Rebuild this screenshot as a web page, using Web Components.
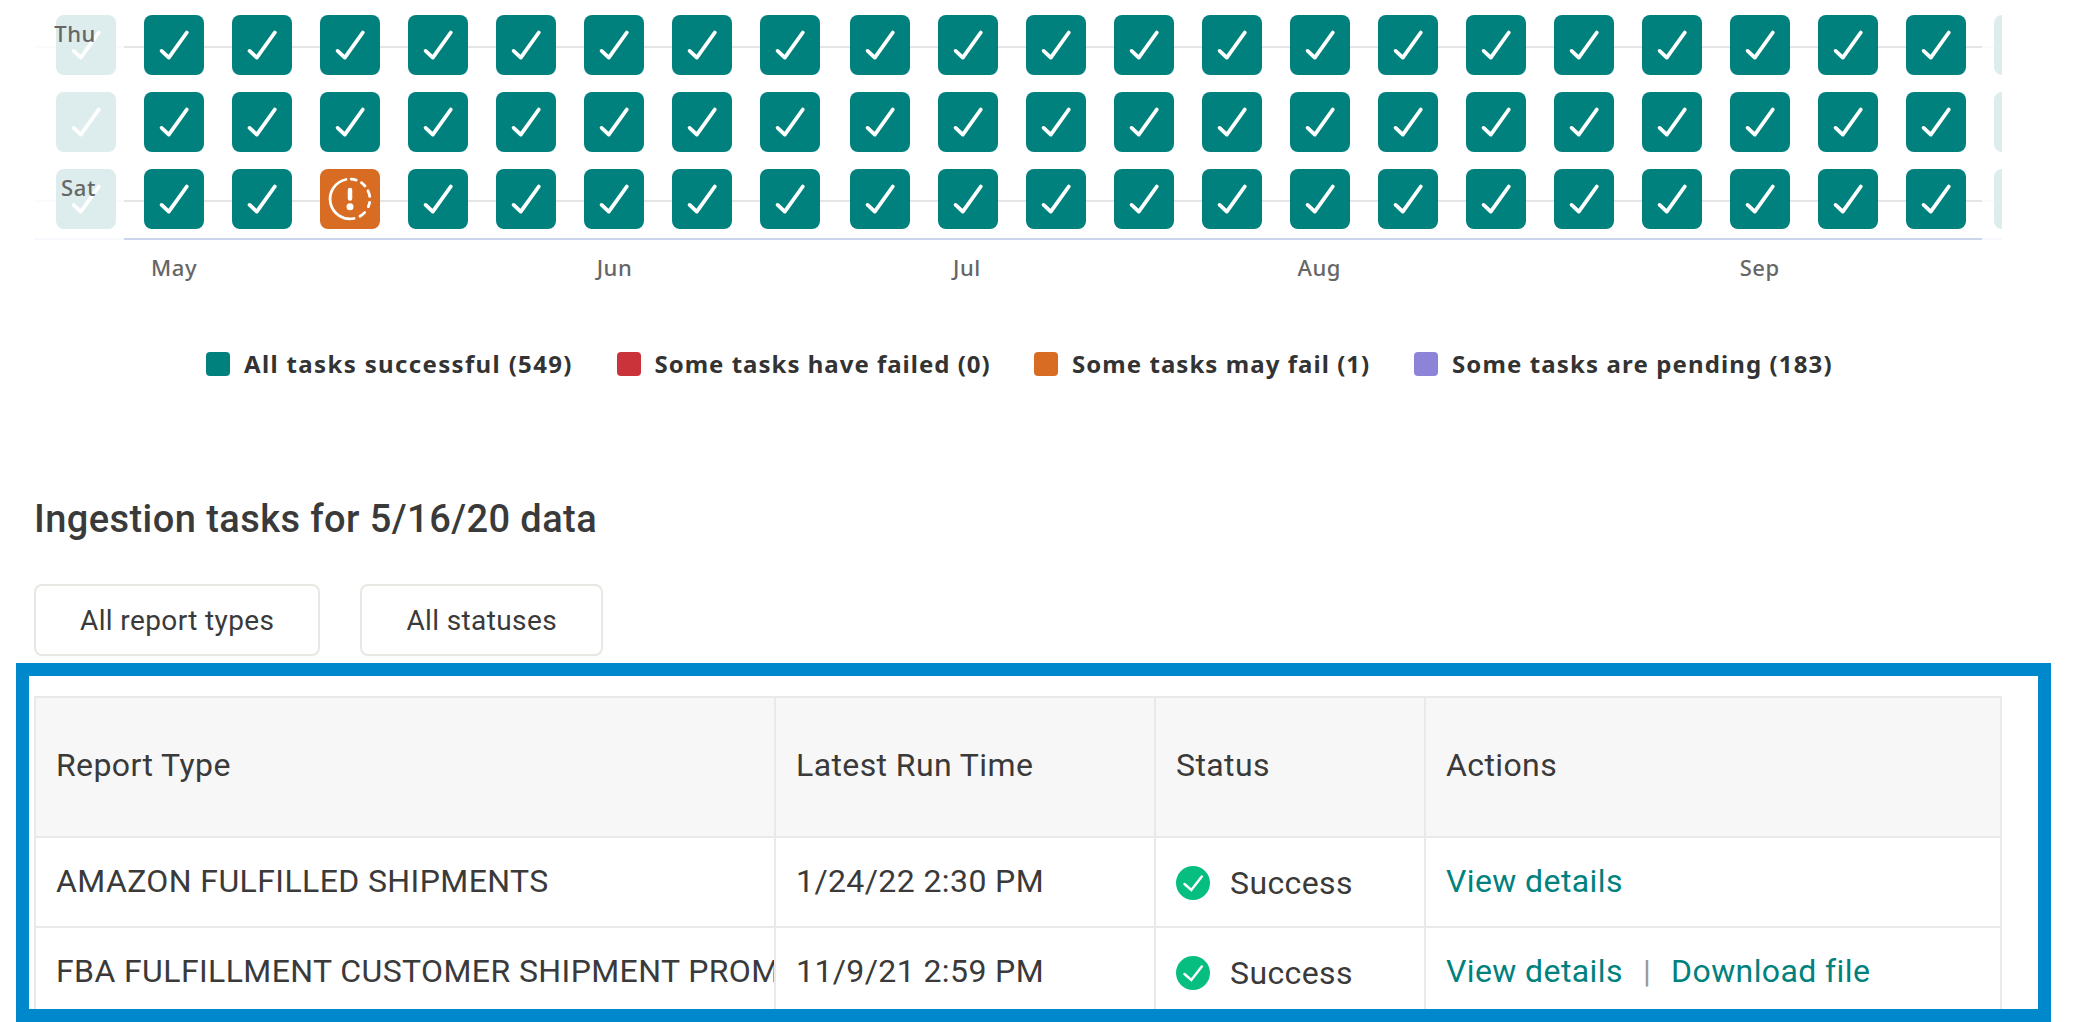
<!DOCTYPE html>
<html lang="en">
<head>
<meta charset="utf-8">
<title>Ingestion tasks</title>
<style>
    :root {
        --teal: #01817e;
        --red: #cb333b;
        --orange: #d86c22;
        --purple: #8d84d8;
        --green: #05be80;
        --blue: #0088cd;
        --text: #3a3a3a;
        --line: #e9e9e9;
        --chart-font: "Noto Sans", sans-serif;
    }

    body {
        margin: 0;
        width: 2100px;
        height: 1022px;
        overflow: hidden;
        background: #fff;
        color: var(--text);
        font-family: Roboto, sans-serif;
    }
</style>
</head>
<body>
<ingestion-page></ingestion-page>

<script>
/** Small helper: build a template from a string */
const template = (html) => {
    const t = document.createElement("template");
    t.innerHTML = html;
    return t;
};

/** Base class that clones a template into an open shadow root */
class BaseElement extends HTMLElement {
    constructor() {
        super();
        const shadow = this.attachShadow({ mode: "open" });
        shadow.append(this.constructor.template.content.cloneNode(true));
    }
}

/**
 * One day of the calendar
 */
class DayCell extends BaseElement {
    static template = template(`
        <style>
            :host {
                display: block;
                flex: none;
                width: 60px;
                height: 60px;
                border-radius: 8px;
                background: var(--teal);
            }
            :host([state="warn"]) { background: var(--orange); }
            :host([faded]) { background: #ddecec; }
            svg { display: block; fill: none; stroke: #fff; stroke-linecap: round; }
            .warn, :host([state="warn"]) .ok { display: none; }
            :host([state="warn"]) .warn { display: block; }
        </style>
        <svg class="ok" width="60" height="60" viewBox="0 0 60 60" stroke-width="3.8" stroke-linejoin="round">
            <path d="M17.6 35.9 L24.8 42.6 L42.8 17.5"/>
        </svg>
        <svg class="warn" width="60" height="60" viewBox="0 0 60 60" stroke-width="2.8">
            <path d="M26 10.5 A19.9 19.9 0 1 0 34 49.5"/>
            <path d="M31.2 10.1 A19.9 19.9 0 0 1 36.2 11.1 M41.4 13.7 A19.9 19.9 0 0 1 45 17 M48 21.8 A19.9 19.9 0 0 1 49.8 27.4 M49.6 33.4 A19.9 19.9 0 0 1 48.3 37.6 M44.6 43.6 A19.9 19.9 0 0 1 40 47.2"/>
            <path d="M30 21 V29.6" stroke-width="4.5"/>
            <circle cx="30" cy="37.8" r="3.5" fill="#fff" stroke="none"/>
        </svg>
    `);
}
customElements.define("day-cell", DayCell);

/**
 * A weekday row, with an optional label over the first cell
 */
class WeekdayRow extends BaseElement {
    static template = template(`
        <style>
            :host {
                display: flex;
                position: relative;
                gap: 28px;
                height: 60px;
                padding-left: 22px;
                margin-bottom: 17px;
            }
            :host([label]) {
                background:
                    linear-gradient(#e5e5e5, #e5e5e5) 90px 31px / 1858px 2px no-repeat,
                    linear-gradient(#fbfbfb, #fbfbfb) 0 31px / 100% 2px no-repeat;
            }
            span {
                position: absolute;
                right: 1906px;
                top: 3px;
                font: 500 22px/30px var(--chart-font);
                letter-spacing: 0.6px;
                color: #666;
            }
            /* half year boundary */
            day-cell:nth-of-type(10) { margin-left: 2px; }
        </style>
        <span></span>
    `);

    connectedCallback() {
        this.shadowRoot.querySelector("span").textContent = this.getAttribute("label") || "";
        const warn = this.getAttribute("warn");
        for (let i = 0; i < 23; i++) {
            const cell = document.createElement("day-cell");
            if (i === 0 || i === 22) cell.setAttribute("faded", "");
            if (warn === String(i)) cell.setAttribute("state", "warn");
            this.shadowRoot.append(cell);
        }
    }
}
customElements.define("weekday-row", WeekdayRow);

/**
 * Calendar chart, rows on top of the month axis
 */
class TaskCalendar extends BaseElement {
    static template = template(`
        <style>
            :host {
                display: block;
                width: 1968px;
                height: 290px;
                padding-top: 15px;
                box-sizing: border-box;
                overflow: hidden;
            }
            .axis {
                display: grid;
                grid-template-columns: repeat(21, 88.1px);
                margin-top: -8px;
                padding: 14px 0 0 96px;
                background:
                    linear-gradient(#cad5ec, #cad5ec) 90px 0 / 1858px 2px no-repeat,
                    linear-gradient(#f8f9fd, #f8f9fd) 0 0 / 100% 2px no-repeat;
                font: 500 22px/30px var(--chart-font);
                letter-spacing: 0.6px;
                color: #666;
                text-align: center;
            }
            .axis span { grid-row: 1; }
        </style>
        <weekday-row label="Thu"></weekday-row>
        <weekday-row></weekday-row>
        <weekday-row label="Sat" warn="3"></weekday-row>
        <div class="axis">
            <span style="grid-column: 1">May</span>
            <span style="grid-column: 6">Jun</span>
            <span style="grid-column: 10">Jul</span>
            <span style="grid-column: 14">Aug</span>
            <span style="grid-column: 19">Sep</span>
        </div>
    `);
}
customElements.define("task-calendar", TaskCalendar);

/**
 * Legend entry: colored swatch and its text
 */
class LegendItem extends BaseElement {
    static template = template(`
        <style>
            :host {
                display: flex;
                align-items: center;
                gap: 14px;
                font: bold 24px/32px var(--chart-font);
                white-space: nowrap;
                color: #333;
            }
            i {
                width: 24px;
                height: 24px;
                border-radius: 4px;
                background: var(--swatch);
            }
            span { padding-top: 1px; }
        </style>
        <i></i><span><slot></slot></span>
    `);
}
customElements.define("legend-item", LegendItem);

/**
 * Filter button
 */
class FilterButton extends BaseElement {
    static template = template(`
        <style>
            :host { display: block; }
            button {
                display: block;
                height: 72px;
                padding: 2px 44px 0;
                border: 2px solid #e9e7e2;
                border-radius: 8px;
                background: #fff;
                color: inherit;
                font: 28px/32px Roboto, sans-serif;
                letter-spacing: 0.38px;
            }
        </style>
        <button><slot></slot></button>
    `);
}
customElements.define("filter-button", FilterButton);

/**
 * Status with a round check icon
 */
class TaskStatus extends BaseElement {
    static template = template(`
        <style>
            :host { display: flex; align-items: center; gap: 20px; padding-top: 4px; }
            svg { display: block; }
        </style>
        <svg width="34" height="34" viewBox="0 0 34 34">
            <circle cx="17" cy="17" r="17" fill="var(--green)"/>
            <path d="M8.5 18 L15.3 24 L25.8 10.5" fill="none" stroke="#fff" stroke-width="2.5" stroke-linecap="round"/>
        </svg>
        <slot></slot>
    `);
}
customElements.define("task-status", TaskStatus);

/**
 * Table row with four columns
 */
class TableRow extends BaseElement {
    static template = template(`
        <style>
            :host {
                display: grid;
                grid-template-columns: 740px 380px 270px 1fr;
                height: 88px;
                border-bottom: 2px solid var(--line);
                font-size: 32px;
                line-height: 40px;
                letter-spacing: 0.4px;
            }
            :host([header]) { height: 138px; background: #f7f7f7; }
            div {
                display: flex;
                align-items: center;
                overflow: hidden;
                padding: 0 0 2px 20px;
                white-space: nowrap;
                border-right: 2px solid var(--line);
            }
            :host([header]) div { padding-bottom: 4px; }
        </style>
        <div><slot name="type"></slot></div>
        <div><slot name="time"></slot></div>
        <div><slot name="status"></slot></div>
        <div><slot name="actions"></slot></div>
    `);
}
customElements.define("table-row", TableRow);

/**
 * Links of a row, separated by a bar
 */
class RowActions extends BaseElement {
    static template = template(`
        <style>
            :host { display: flex; }
            a { color: var(--teal); }
            a + a::before { content: "|"; color: #999; margin: 0 20px; }
        </style>
    `);

    connectedCallback() {
        this.getAttribute("links").split(",").forEach((text) => {
            const a = document.createElement("a");
            a.textContent = text;
            this.shadowRoot.append(a);
        });
    }
}
customElements.define("row-actions", RowActions);

/**
 * Whole page
 */
class IngestionPage extends BaseElement {
    static template = template(`
        <style>
            :host { display: block; }
            task-calendar { margin-left: 34px; }
            .legend {
                display: grid;
                grid-template-columns: 410.5px 417.5px 380px auto;
                margin: 57px 0 0 206px;
            }
            h2 {
                margin: 115px 0 0 34px;
                font-size: 38px;
                line-height: 48px;
                font-weight: 500;
                letter-spacing: 0.43px;
            }
            .filters { display: flex; gap: 40px; margin: 41px 0 0 34px; }
            /* highlighted area round the table */
            .frame {
                width: 2035px;
                height: 359px;
                margin: 7px 0 0 16px;
                padding: 20px 36px 0 5px;
                box-sizing: border-box;
                border: 13px solid var(--blue);
                overflow: hidden;
            }
            .table { border: 2px solid var(--line); border-right: none; }
        </style>
        <task-calendar></task-calendar>
        <div class="legend">
            <legend-item style="--swatch: var(--teal); letter-spacing: 1.35px">All tasks successful (549)</legend-item>
            <legend-item style="--swatch: var(--red); letter-spacing: 1px">Some tasks have failed (0)</legend-item>
            <legend-item style="--swatch: var(--orange); letter-spacing: 1.05px">Some tasks may fail (1)</legend-item>
            <legend-item style="--swatch: var(--purple); letter-spacing: 1.12px">Some tasks are pending (183)</legend-item>
        </div>
        <h2>Ingestion tasks for 5/16/20 data</h2>
        <div class="filters">
            <filter-button>All report types</filter-button>
            <filter-button>All statuses</filter-button>
        </div>
        <div class="frame">
            <div class="table">
                <table-row header>
                    <span slot="type">Report Type</span>
                    <span slot="time">Latest Run Time</span>
                    <span slot="status">Status</span>
                    <span slot="actions">Actions</span>
                </table-row>
                <table-row>
                    <span slot="type">AMAZON FULFILLED SHIPMENTS</span>
                    <span slot="time">1/24/22 2:30 PM</span>
                    <task-status slot="status">Success</task-status>
                    <row-actions slot="actions" links="View details"></row-actions>
                </table-row>
                <table-row>
                    <span slot="type">FBA FULFILLMENT CUSTOMER SHIPMENT PROM</span>
                    <span slot="time">11/9/21 2:59 PM</span>
                    <task-status slot="status">Success</task-status>
                    <row-actions slot="actions" links="View details,Download file"></row-actions>
                </table-row>
            </div>
        </div>
    `);
}
customElements.define("ingestion-page", IngestionPage);
</script>
</body>
</html>
